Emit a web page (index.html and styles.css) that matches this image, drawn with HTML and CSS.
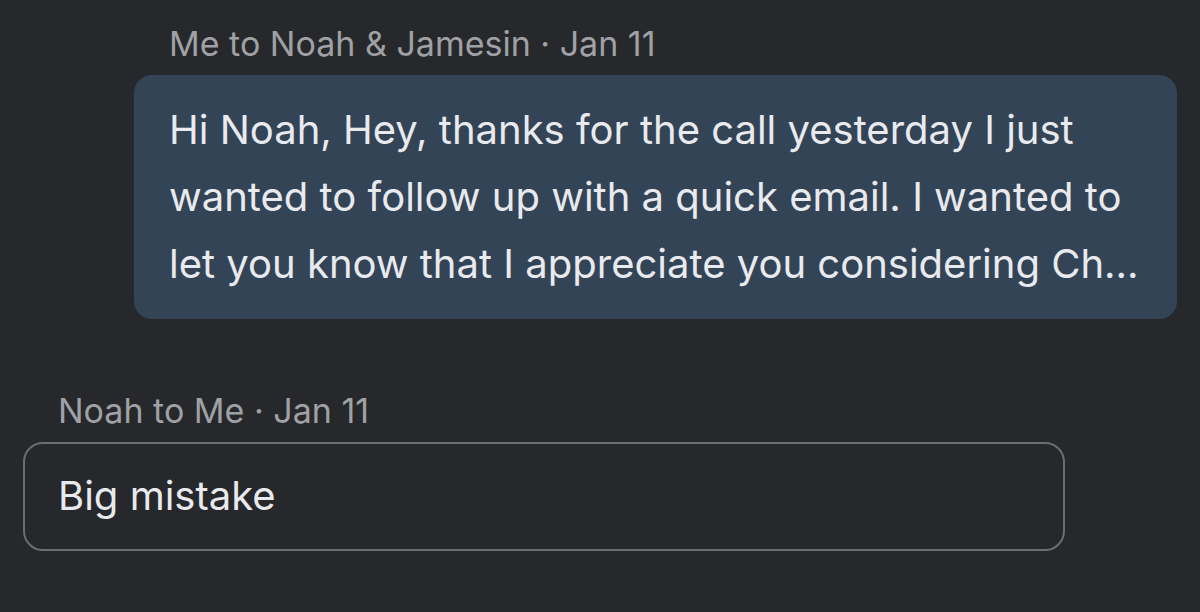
FILE: index.html
```html
<!DOCTYPE html>
<html>
<head>
<meta charset="utf-8">
<link rel="stylesheet" href="styles.css">
</head>
<body>
<div class="thread">
  <div class="msg sent">
    <div class="meta">Me to Noah &amp; Jamesin · Jan 11</div>
    <div class="bubble">
      <span class="line">Hi Noah, Hey, thanks for the call yesterday I just</span>
      <span class="line">wanted to follow up with a quick email. I wanted to</span>
      <span class="line">let you know that I appreciate you considering Ch...</span>
    </div>
  </div>
  <div class="msg recv">
    <div class="meta">Noah to Me · Jan 11</div>
    <div class="bubble">
      <span class="line">Big mistake</span>
    </div>
  </div>
</div>
</body>
</html>
```

FILE: styles.css
```css
html, body {
  margin: 0;
  padding: 0;
  background: #27282c;
  height: 100%;
}
body {
  font-family: Inter, "Noto Sans", sans-serif;
  -webkit-font-smoothing: antialiased;
  overflow: hidden;
}
.thread {
  display: flex;
  flex-direction: column;
  padding-top: 24px;
}
.meta {
  color: #9fa1a5;
  font-size: 34px;
  line-height: 40px;
  padding-left: 35px;
  margin-bottom: 11px;
}
.bubble {
  color: #e9eaee;
  font-size: 40px;
  line-height: 67px;
}
.line {
  display: block;
  white-space: nowrap;
}
.sent {
  margin-left: 134px;
  margin-right: 23px;
}
.sent .bubble {
  background: #334457;
  border-radius: 18px;
  padding: 21px 35px 22px;
}
.recv {
  margin-left: 23px;
  width: 1042px;
  margin-top: 72px;
}
.recv .bubble {
  border: 2px solid #6b6d71;
  border-radius: 20px;
  padding: 18px 33px 20px;
}
```
